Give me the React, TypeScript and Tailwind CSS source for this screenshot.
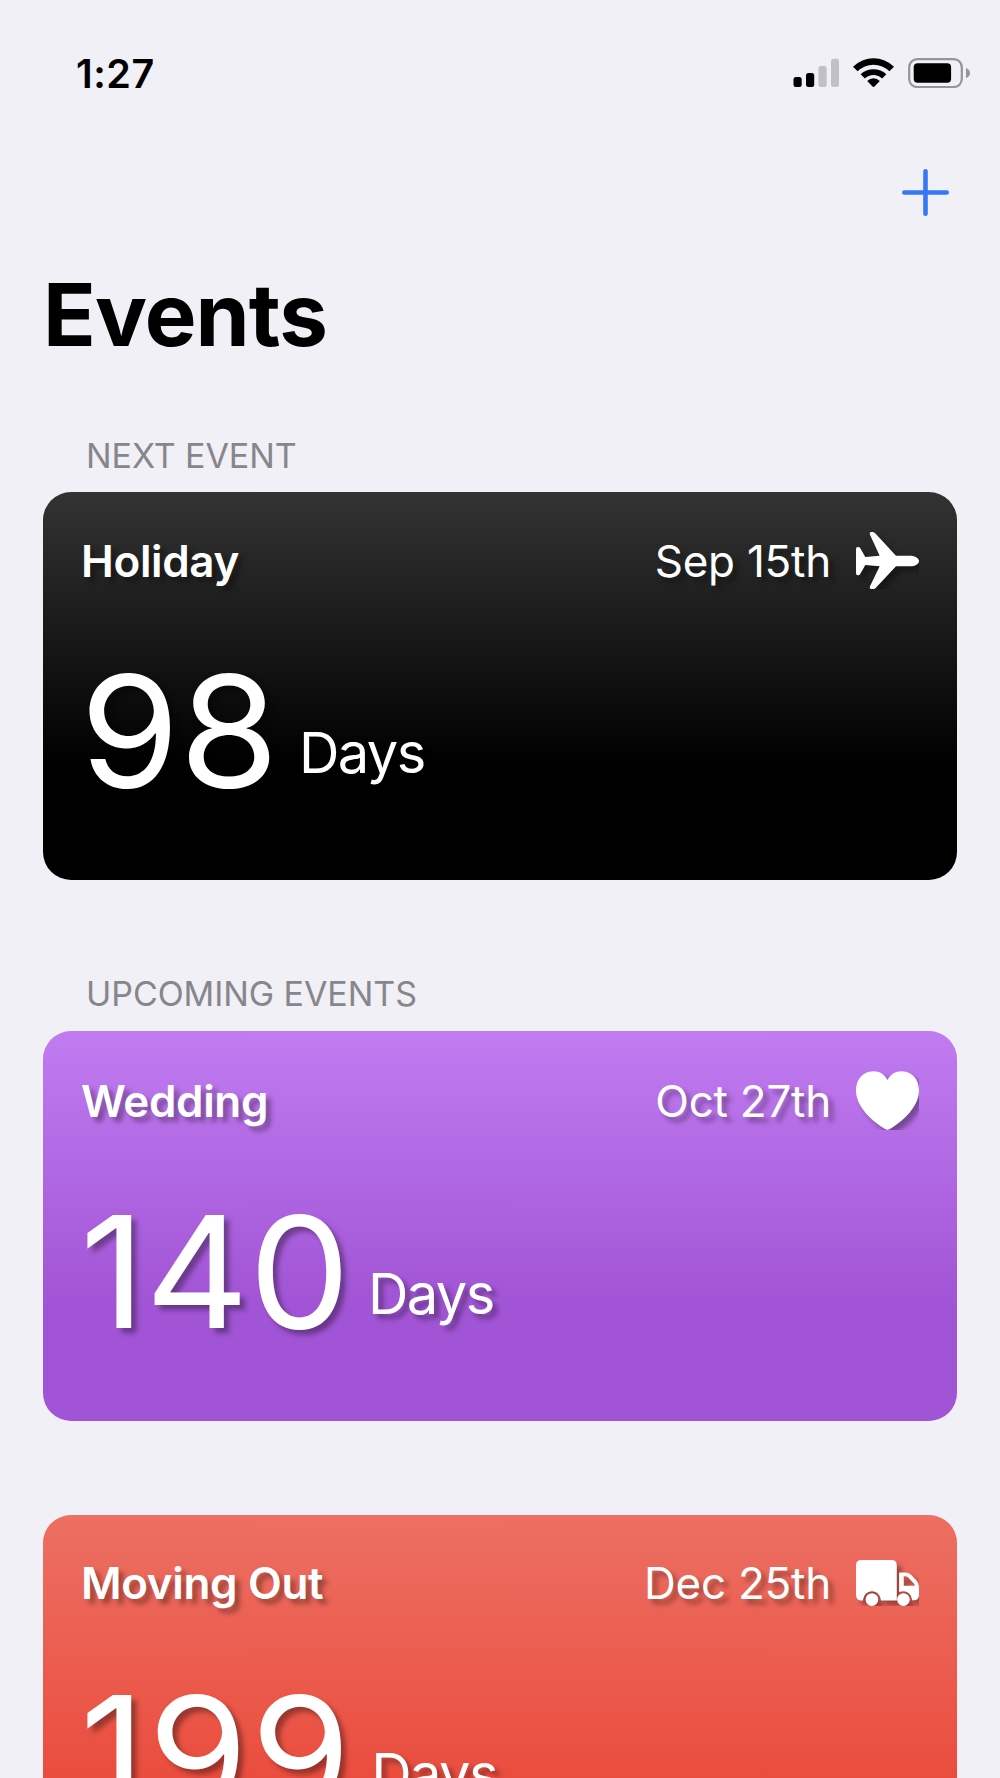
import type { ReactNode } from "react";

const PlaneIcon = () => (
  <svg viewBox="0 0 189 171" className="h-[57px] w-[63px]" fill="currentColor">
    <path d="M0 51Q0 45 5 45H7Q10 45 13 49L28 75L71 71L42 8Q39 0 46 0H50Q55 0 59 5L120 71H162C178 71 189 79 189 87C189 96 178 103 162 103H120L59 168Q56 171 52 171H46Q39 171 42 163L71 103L28 99L13 125Q10 130 7 130H5Q0 130 0 124Z" />
  </svg>
);

const HeartIcon = () => (
  <svg viewBox="0 0 190 177" className="h-[59px] w-[63px]" fill="currentColor">
    <path d="M95 27C103 10 118 0 138 0C169 0 190 25 190 58C190 102 151 143 106 172Q98 177 95 177Q92 177 84 172C39 143 0 102 0 58C0 25 21 0 52 0C72 0 87 10 95 27Z" />
  </svg>
);

const TruckIcon = () => (
  <svg viewBox="0 0 190 138" className="h-[46px] w-[63px]" fill="currentColor">
    <path d="M17 0H107Q123 0 123 16V122H75C74 106 63 94 48 94C34 94 23 105 21 122H17Q0 122 0 105V16Q0 0 17 0Z" />
    <path
      fillRule="evenodd"
      d="M130 37H148Q159 37 166 44L183 62Q190 69 190 80V106Q190 121 174 121H169C168 105 157 94 143 94Q136 94 130 97ZM144 49V77H177Q178 74 175 71L159 54Q155 49 149 49Z"
    />
    <circle cx="48" cy="119" r="19" />
    <circle cx="143" cy="119" r="19" />
  </svg>
);

const StatusBar = () => (
  <div className="flex h-[58px] items-start justify-between pl-[76px] pr-[30px]">
    <span className="pt-px text-[39.5px] leading-[30px] font-semibold tracking-[0.5px]">1:27</span>
    <div className="flex items-start">
      <svg viewBox="0 0 46 30" className="mr-[14px] h-[30px] w-[46px]">
        <rect x="0.5" y="19" width="8.2" height="10" rx="2.5" />
        <rect x="13" y="15" width="8.2" height="14" rx="2.5" />
        <rect x="25.5" y="8" width="8.2" height="21" rx="2.5" fill="#c1c0c6" />
        <rect x="38" y="0.7" width="8" height="28.3" rx="2.5" fill="#c1c0c6" />
      </svg>
      <svg viewBox="-62 -88 124 90" className="mr-[14px] h-[30px] w-[41px]">
        <path d="M-62 -62A88 88 0 0 1 62 -62L48 -48A68 68 0 0 0 -48 -48Z" />
        <path d="M-39 -39A57 57 0 0 1 39 -39L26 -26A37 37 0 0 0 -26 -26Z" />
        <path d="M-19 -19A27 27 0 0 1 19 -19L3 -2Q0 1 -3 -2Z" />
      </svg>
      <svg viewBox="0 0 62 30" className="h-[30px] w-[62px]">
        <rect x="1.2" y="1.2" width="52.6" height="27.8" rx="8" fill="none" stroke="#95949a" strokeWidth="2.2" />
        <rect x="5.7" y="5.2" width="37.4" height="19.6" rx="4" />
        <path d="M58 10Q62 11.5 62 15Q62 18.5 58 20Z" fill="#95949a" />
      </svg>
    </div>
  </div>
);

type CardProps = {
  title: string;
  date: string;
  days: number;
  color: string;
  icon: ReactNode;
  daysClass?: string;
};

const EventCard = ({ title, date, days, color, icon, daysClass = "" }: CardProps) => {
  return (
    <div
      className={`flex flex-col rounded-[28px] bg-linear-to-b/srgb to-70% px-[38px] pt-[40px] pb-[72px] text-white text-shadow-[5px_5px_5px_rgb(0_0_0/0.35)] ${color}`}
    >
      <div className="flex items-center">
        <h3 className="pt-px text-[44px] leading-[54px] font-semibold tracking-[-0.35px]">{title}</h3>
        <span className="mr-[25px] ml-auto pt-px text-[44px] leading-[54px] tracking-[-0.25px]">{date}</span>
        <span className="overflow-hidden">
          <span className="block drop-shadow-[5px_5px_2.5px_rgb(0_0_0/0.35)]">{icon}</span>
        </span>
      </div>
      <div className="mt-[64px] flex items-end">
        <span
          className={`-ml-px origin-left scale-x-[1.035] text-[155px] leading-[155px] [font-kerning:none] ${daysClass}`}
        >
          {days}
        </span>
        <span className="mb-[27px] ml-[27px] text-[56px] leading-[56px] tracking-[-1.6px]">Days</span>
      </div>
    </div>
  );
};

const App = () => {
  return (
    <div className="h-[1778px] overflow-hidden bg-[#f1f0f6] pt-[58px] font-['Inter',sans-serif] text-black">
      <StatusBar />
      <div className="flex justify-end pt-[53px] pr-[51px]">
        <svg viewBox="0 0 47 47" className="size-[47px]" stroke="#3478f6" strokeWidth="4.6" strokeLinecap="round">
          <path d="M2.3 23.5H44.7M23.5 2.3V44.7" />
        </svg>
      </div>
      <main className="px-[43px]">
        <h1 className="mt-[55px] text-[87px] leading-[88px] font-bold tracking-[-0.9px]">Events</h1>
        <h2 className="mt-[77px] pl-[43px] text-[34px] leading-[40px] tracking-[-0.07px] text-[#87868b]">NEXT EVENT</h2>
        <div className="mt-[16px]">
          <EventCard title="Holiday" date="Sep 15th" days={98} color="from-[#333333] to-[#000000]" icon={<PlaneIcon />} />
        </div>
        <h2 className="mt-[94px] pl-[43px] text-[34px] leading-[40px] tracking-[-0.07px] text-[#87868b]">
          UPCOMING EVENTS
        </h2>
        <div className="mt-[17px] flex flex-col gap-[94px]">
          <EventCard title="Wedding" date="Oct 27th" days={140} color="from-[#c17cf1] to-[#a154d5]" icon={<HeartIcon />} />
          <EventCard
            title="Moving Out"
            date="Dec 25th"
            days={199}
            daysClass="tracking-[3px]"
            color="from-[#ec7063] to-[#ea4c3d]"
            icon={<TruckIcon />}
          />
        </div>
      </main>
    </div>
  );
};

export default App;
